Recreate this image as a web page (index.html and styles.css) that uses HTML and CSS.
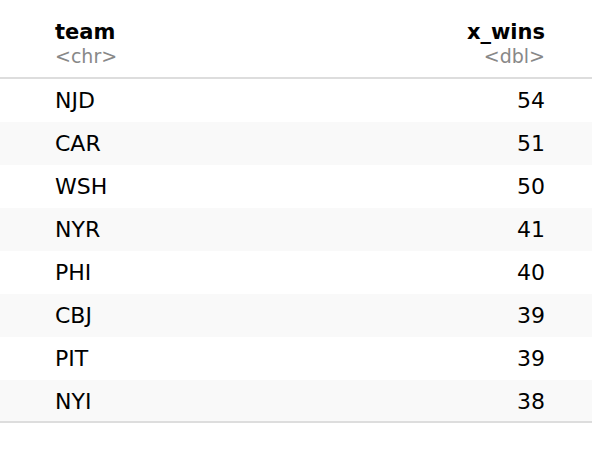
FILE: index.html
```html
<!DOCTYPE html>
<html lang="en">

<head>
  <meta charset="UTF-8" />
  <meta name="viewport" content="width=device-width, initial-scale=1.0" />
  <title>team x_wins</title>
  <link rel="stylesheet" href="styles.css">
</head>

<body>
  <table class="tabela">
    <thead>
      <tr>
        <th class="col-texto">team<span class="tipo">&lt;chr&gt;</span></th>
        <th class="col-num">x_wins<span class="tipo">&lt;dbl&gt;</span></th>
      </tr>
    </thead>
    <tbody>
      <tr><td class="col-texto">NJD</td><td class="col-num">54</td></tr>
      <tr><td class="col-texto">CAR</td><td class="col-num">51</td></tr>
      <tr><td class="col-texto">WSH</td><td class="col-num">50</td></tr>
      <tr><td class="col-texto">NYR</td><td class="col-num">41</td></tr>
      <tr><td class="col-texto">PHI</td><td class="col-num">40</td></tr>
      <tr><td class="col-texto">CBJ</td><td class="col-num">39</td></tr>
      <tr><td class="col-texto">PIT</td><td class="col-num">39</td></tr>
      <tr><td class="col-texto">NYI</td><td class="col-num">38</td></tr>
    </tbody>
  </table>
</body>

</html>
```

FILE: styles.css
```css
body,
html {
  margin: 0;
  padding: 0;
  background-color: #ffffff;
  color: #000000;
  font-family: 'DejaVu Sans', sans-serif;
}

.tabela {
  width: 100%;
  border-collapse: collapse;
  font-size: 22px;
}

.tabela th,
.tabela td {
  padding: 0 47px 0 55px;
}

.tabela th {
  height: 78px;
  font-size: 21px;
  font-weight: bold;
  vertical-align: top;
  padding-top: 20px;
  box-sizing: border-box;
  line-height: 24px;
  border-bottom: 2px solid #dddddd;
}

.tipo {
  display: block;
  font-weight: normal;
  color: #888888;
  font-size: 19px;
  line-height: 24px;
}

.tabela td {
  height: 43px;
  line-height: 43px;
}

.tabela tbody tr:nth-child(even) {
  background-color: #f9f9f9;
}

.tabela tbody tr:last-child td {
  box-shadow: inset 0 -2px 0 #dddddd;
}

.col-texto {
  text-align: left;
}

.col-num {
  text-align: right;
}
```
